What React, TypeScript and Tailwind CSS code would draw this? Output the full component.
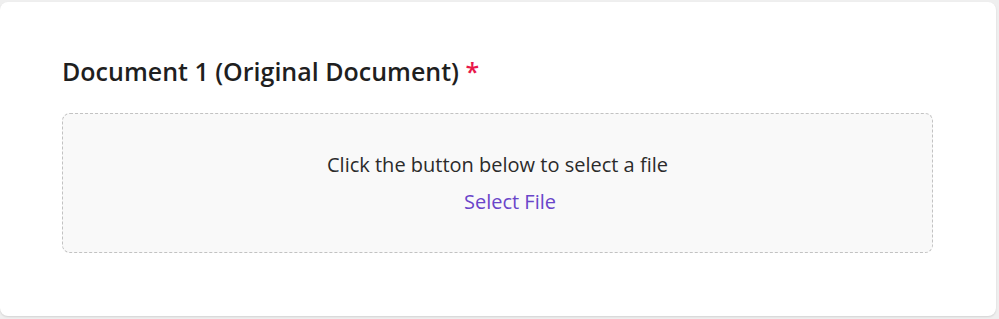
import React from 'react';

const App: React.FC = () => {
    return (
        <div className="min-h-[319px] w-[999px] bg-[#efefef] pt-[2px]" style={{ fontFamily: '"Open Sans", sans-serif' }}>
            <div className="w-[996px] h-[314px] rounded-lg bg-white shadow-[0_1px_2px_rgba(0,0,0,0.12)] pl-[62px] pr-[63px] pt-[53px]">
                <h2 className="text-[25px] leading-[32px] font-semibold text-[#1f1f1f]">
                    Document 1 (Original Document) <span className="text-[#e8184a]">*</span>
                </h2>
                <div className="mt-[26px] h-[140px] rounded-lg border-[1.5px] border-dashed border-[#c2c2c2] bg-[#f9f9f9] flex flex-col items-center justify-center gap-[10px]">
                    <p className="text-[20px] leading-[27px] text-[#2b2b2b]">Click the button below to select a file</p>
                    <button type="button" className="ml-[25px] text-[20px] leading-[27px] text-[#6a45c9]">
                        Select File
                    </button>
                </div>
            </div>
        </div>
    );
};

export default App;
